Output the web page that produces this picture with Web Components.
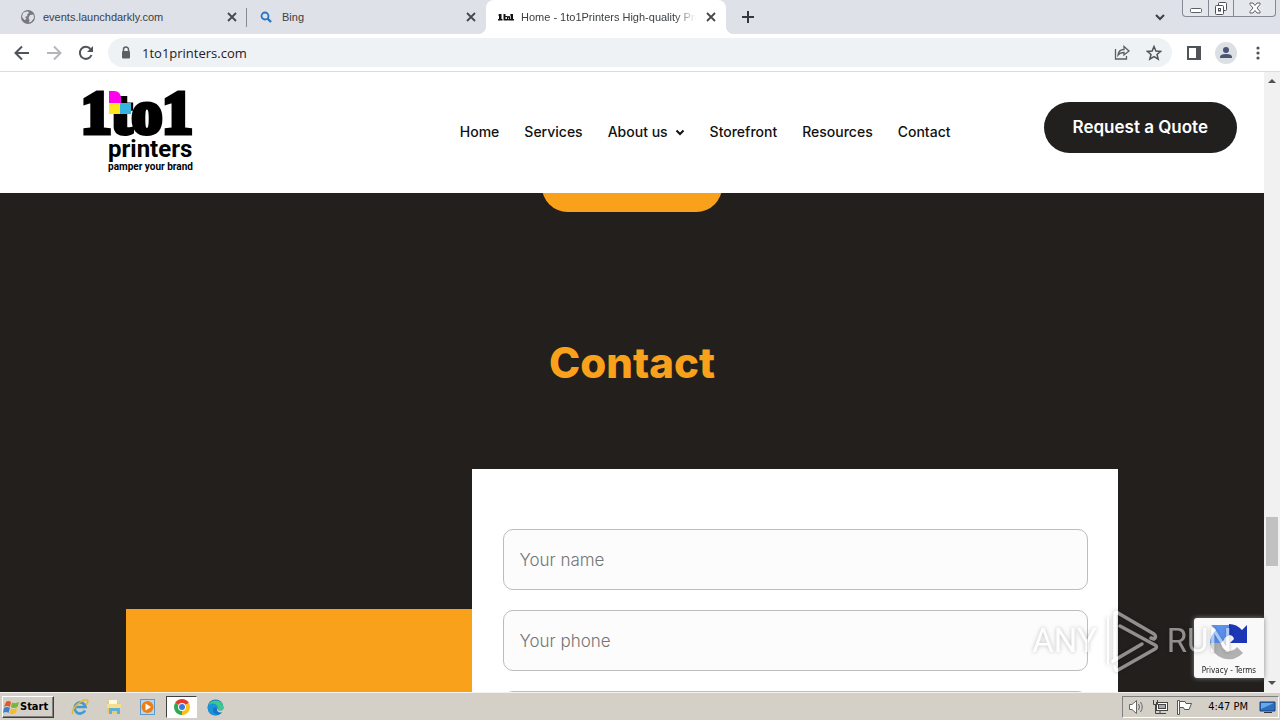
<!DOCTYPE html>
<html lang="en">
<head>
<meta charset="utf-8">
<title>Home - 1to1Printers High-quality Printing</title>
<style>
  body {
    margin: 0;
    height: 100vh;
    display: flex;
    flex-direction: column;
    overflow: hidden;
    font-family: Inter, "Liberation Sans", sans-serif;
    --ui-font: "DejaVu Sans Condensed", "DejaVu Sans", sans-serif;
    --orange: #f9a11b;
    --dark: #221f1d;
  }
  main {
    flex: 1;
    min-height: 0;
    display: flex;
  }
  site-page {
    flex: 1;
    min-width: 0;
  }
</style>
</head>
<body>
<tab-strip>
  <browser-tab label="events.launchdarkly.com">
    <svg slot="icon" width="16" height="16" viewBox="0 0 16 16"><circle cx="8" cy="8" r="7" fill="#77797c"/><path d="M3 4 Q5 2 8 2.500 L9 4 L7 5.500 L7.500 7 L5 8 L6.500 10 L4.500 11 L2 8Z M10 6 L13.500 5.500 L14 9 L11.500 12.500 L9 13.500 L9.500 11 L8.500 9Z" fill="#dee1e8"/></svg>
  </browser-tab>
  <browser-tab label="Bing">
    <svg slot="icon" width="16" height="16" viewBox="0 0 16 16" fill="none" stroke="#2b74c0"><circle cx="6" cy="7" r="3.500" stroke-width="1.800"/><path d="M8.500 9.500 L12 13" stroke-width="2.400"/></svg>
  </browser-tab>
  <browser-tab label="Home - 1to1Printers High-quality Prin" active>
    <svg slot="icon" width="16" height="16" viewBox="0 0 16 16" fill="#111"><path d="M1 5h2.500v5h1v1.500H0v-1.500h1V6.500H0zM5.500 5h2v2h1.500v1H7.500v2H9v1.500H5.500zM12.500 5H15v5h1v1.500h-4v-1.500h.8V6.500H12z"/><rect x="9.500" y="7.800" width="2" height="3" fill="none" stroke="#111" stroke-width="1.200"/></svg>
  </browser-tab>
</tab-strip>
<address-bar url="1to1printers.com"></address-bar>
<main>
  <site-page>
    <site-header slot="header">
      <brand-logo slot="logo"></brand-logo>
      <nav-link href="#home">Home</nav-link>
      <nav-link href="#services">Services</nav-link>
      <nav-link href="#about" dropdown>About us</nav-link>
      <nav-link href="#storefront">Storefront</nav-link>
      <nav-link href="#resources">Resources</nav-link>
      <nav-link href="#contact">Contact</nav-link>
    </site-header>
    <contact-section heading="Contact">
      <form-field label="Your name" name="name"></form-field>
      <form-field label="Your phone" name="phone" type="tel"></form-field>
      <form-field label="Your email" name="email" type="email"></form-field>
    </contact-section>
  </site-page>
  <scroll-bar></scroll-bar>
</main>
<task-bar time="4:47 PM"></task-bar>
<recaptcha-badge></recaptcha-badge>
<water-mark></water-mark>

<script>
class BaseElement extends HTMLElement {
  constructor() {
    super();
    this.attachShadow({ mode: "open" });
  }

  connectedCallback() {
    this.shadowRoot.innerHTML = `<style>* { box-sizing: border-box; } svg { display: block; flex: none; }</style>` + this.render();
  }
}

class TabStrip extends BaseElement {
  render() {
    return `
      <style>
        :host {
          display: flex;
          flex: none;
          height: 34px;
          padding-left: 8px;
          background: #dee1e8;
          color: #3c4043;
        }
        button {
          border: 0;
          padding: 0;
          background: none;
          color: inherit;
          display: flex;
          align-items: center;
          justify-content: center;
        }
        .new { width: 44px; }
        .search { width: 44px; margin-left: auto; }
        .controls {
          display: flex;
          height: 17px;
          margin: 0 4px 0 0;
          border: 1px solid #858993;
          border-top: 0;
          border-radius: 0 0 4px 4px;
          background: #e4e7ec;
        }
        .controls button { width: 25px; }
        .controls button + button { border-left: 1px solid #858993; }
        .controls button:last-child { width: 42px; }
      </style>
      <slot></slot>
      <button class="new" aria-label="New tab">
        <svg width="14" height="14" viewBox="0 0 14 14" stroke="#34373b" stroke-width="2"><path d="M7 1V13M1 7H13"/></svg>
      </button>
      <button class="search" aria-label="Search tabs">
        <svg width="12" height="12" viewBox="0 0 12 12" fill="none" stroke="#3c4043" stroke-width="2"><path d="M2 4L6 8L10 4"/></svg>
      </button>
      <div class="controls">
        <button aria-label="Minimize"><svg width="14" height="14" viewBox="0 0 14 14"><rect x="1.500" y="7.500" width="11" height="4" rx="1" fill="#fff" stroke="#5c6068"/></svg></button>
        <button aria-label="Restore"><svg width="14" height="14" viewBox="0 0 14 14" fill="#fff" stroke="#4c5058"><rect x="4.500" y="1.500" width="8" height="8" rx="1"/><rect x="1.500" y="4.500" width="8" height="9" rx="1"/><rect x="4.500" y="7.500" width="2" height="2.500"/></svg></button>
        <button aria-label="Close"><svg width="14" height="12" viewBox="0 0 14 12" fill="#fff" stroke="#5c6068"><path d="M2 1H5L7 3.500L9 1H12V2.500L9 6L12 9.500V11H9L7 8.500L5 11H2V9.500L5 6L2 2.500Z"/></svg></button>
      </div>
    `;
  }
}

class BrowserTab extends BaseElement {
  render() {
    return `
      <style>
        :host {
          position: relative;
          display: flex;
          align-items: center;
          gap: 7px;
          width: 239px;
          padding: 0 7px 0 12px;
          box-sizing: border-box;
          font: 11px/16px "Liberation Sans", sans-serif;
        }
        :host(:first-child)::after {
          content: "";
          position: absolute;
          right: 0;
          top: 8px;
          width: 1px;
          height: 19px;
          background: #868b94;
        }
        :host([active]) {
          width: 240px;
          background: #fff;
          border-radius: 8px 8px 0 0;
        }
        /* outward curves where the active tab meets the toolbar */
        :host([active])::before,
        :host([active])::after {
          content: "";
          position: absolute;
          bottom: 0;
          width: 8px;
          height: 8px;
        }
        :host([active])::before {
          left: -8px;
          background: radial-gradient(circle at 0 0, #dee1e8 8px, #fff 8px);
        }
        :host([active])::after {
          right: -8px;
          background: radial-gradient(circle at 100% 0, #dee1e8 8px, #fff 8px);
        }
        .label {
          flex: 1;
          min-width: 0;
          overflow: hidden;
          white-space: nowrap;
        }
        :host([active]) .label {
          -webkit-mask-image: linear-gradient(90deg, #000 88%, transparent);
          mask-image: linear-gradient(90deg, #000 88%, transparent);
        }
        button {
          width: 16px;
          height: 16px;
          padding: 3px;
          border: 0;
          background: none;
        }
      </style>
      <slot name="icon"></slot>
      <span class="label">${this.getAttribute("label")}</span>
      <button aria-label="Close tab">
        <svg width="10" height="10" viewBox="0 0 10 10" stroke="#45484d" stroke-width="1.800"><path d="M1 1L9 9M9 1L1 9"/></svg>
      </button>
    `;
  }
}

class AddressBar extends BaseElement {
  render() {
    return `
      <style>
        :host {
          display: flex;
          flex: none;
          align-items: center;
          height: 38px;
          box-sizing: border-box;
          padding: 0 6px;
          border-bottom: 1px solid #dadce0;
          background: #fff;
        }
        button {
          width: 32px;
          height: 32px;
          padding: 0;
          border: 0;
          background: none;
          display: flex;
          align-items: center;
          justify-content: center;
        }
        .box {
          flex: 1;
          display: flex;
          align-items: center;
          height: 29px;
          margin: 0 6px;
          padding: 0 2px 0 10px;
          border-radius: 15px;
          background: #eff2f5;
        }
        input {
          flex: 1;
          min-width: 0;
          margin-left: 8px;
          padding: 0;
          border: 0;
          outline: 0;
          background: none;
          color: #202124;
          font: 13px/20px "Open Sans", sans-serif;
        }
      </style>
      <button aria-label="Back"><svg width="16" height="16" viewBox="0 0 16 16" fill="none" stroke="#505357" stroke-width="2"><path d="M15 8H2M8 1.500L1.500 8L8 14.500"/></svg></button>
      <button aria-label="Forward"><svg width="16" height="16" viewBox="0 0 16 16" fill="none" stroke="#b4b6b9" stroke-width="2"><path d="M1 8H14M8 1.500L14.500 8L8 14.500"/></svg></button>
      <button aria-label="Reload"><svg width="16" height="16" viewBox="0 0 16 16"><path d="M13.500 10A6 6 0 1 1 12.500 4" fill="none" stroke="#505357" stroke-width="2"/><path d="M15 1V7H9Z" fill="#505357"/></svg></button>
      <div class="box">
        <svg width="16" height="16" viewBox="0 0 16 16"><path d="M5.500 6V4.500a2.500 2.500 0 0 1 5 0V6" fill="none" stroke="#5b5e62" stroke-width="1.500"/><rect x="4" y="6" width="8" height="7.500" rx="1" fill="#5b5e62"/></svg>
        <input type="text" aria-label="Address" value="${this.getAttribute("url")}">
        <button aria-label="Share"><svg width="16" height="16" viewBox="0 0 16 16" fill="none" stroke="#5b5e62" stroke-width="1.300"><path d="M1.500 4V14H12.500V11"/><path d="M4 10C4.500 6 7 4.500 10 4.500V1.500L15 6L10 10V7.500C7.500 7.500 5.500 8 4 10Z"/></svg></button>
        <button aria-label="Bookmark"><svg width="16" height="16" viewBox="0 0 16 16"><path d="M8 1.500L9.900 6L14.700 6.400L11 9.500L12.200 14.200L8 11.700L3.800 14.200L5 9.500L1.300 6.400L6.100 6Z" fill="none" stroke="#505357" stroke-width="1.500"/></svg></button>
      </div>
      <button aria-label="Side panel"><svg width="16" height="16" viewBox="0 0 16 16"><rect x="2" y="2" width="12" height="12" fill="none" stroke="#505357" stroke-width="2"/><path d="M10 2H15V14H10Z" fill="#505357"/></svg></button>
      <button aria-label="Profile"><svg width="22" height="22" viewBox="0 0 22 22"><circle cx="11" cy="11" r="11" fill="#dcdfe3"/><circle cx="11" cy="8" r="3" fill="#4a5673"/><path d="M5 16V15Q5 12 11 12T17 15V16Z" fill="#4a5673"/></svg></button>
      <button aria-label="Menu"><svg width="16" height="16" viewBox="0 0 16 16" fill="#505357"><circle cx="8" cy="3" r="1.600"/><circle cx="8" cy="8" r="1.600"/><circle cx="8" cy="13" r="1.600"/></svg></button>
    `;
  }
}

class SitePage extends BaseElement {
  render() {
    return `
      <style>
        :host {
          display: flex;
          flex-direction: column;
          overflow: hidden;
          background: var(--dark);
        }
      </style>
      <slot name="header"></slot>
      <slot></slot>
    `;
  }
}

class SiteHeader extends BaseElement {
  render() {
    return `
      <style>
        :host {
          display: grid;
          grid-template-columns: 30% auto 1fr;
          align-items: center;
          flex: none;
          height: 121px;
          box-sizing: border-box;
          padding: 0 27px 0 81px;
          background: #fff;
        }
        nav {
          display: flex;
          gap: 25px;
          margin: 0 0 2px 32px;
        }
        .quote {
          justify-self: end;
          margin-bottom: 10px;
          padding: 0 29px;
          border-radius: 26px;
          background: #221f1f;
          color: #fff;
          font-size: 17px;
          font-weight: 600;
          line-height: 51px;
          text-decoration: none;
          white-space: nowrap;
        }
      </style>
      <slot name="logo"></slot>
      <nav><slot></slot></nav>
      <a class="quote" href="#quote">Request a Quote</a>
    `;
  }
}

class BrandLogo extends BaseElement {
  render() {
    return `
      <style>
        :host { display: block; }
        svg { overflow: visible; }
      </style>
      <svg width="114" height="84" viewBox="0 0 114 84" role="img" aria-label="1to1 printers, pamper your brand">
        <text x="0" y="42" font-family="Liberation Serif" font-weight="700" font-size="61" stroke="#000" stroke-width="5">1to1</text>
        <path d="M28 0H33Q40 0 40 8V12H28Z" fill="#f0e"/>
        <rect x="28" y="12" width="11" height="11" fill="#ffe51f"/>
        <rect x="39" y="12" width="11" height="11" fill="#35b4dd"/>
        <text x="27" y="66" font-family="Roboto" font-weight="700" font-size="24">printers</text>
        <text x="27" y="79" font-family="Roboto" font-weight="700" font-size="10">pamper your brand</text>
      </svg>
    `;
  }
}

class NavLink extends BaseElement {
  render() {
    const arrow = this.hasAttribute("dropdown")
      ? `<svg width="10" height="10" viewBox="0 0 10 10" fill="none" stroke="#111" stroke-width="2"><path d="M1.500 3.500L5 7L8.500 3.500"/></svg>`
      : "";
    return `
      <style>
        :host { display: block; }
        a {
          display: flex;
          align-items: center;
          gap: 7px;
          color: #111;
          font-size: 14px;
          font-weight: 500;
          line-height: 20px;
          text-decoration: none;
          white-space: nowrap;
        }
      </style>
      <a href="${this.getAttribute("href")}"><slot></slot>${arrow}</a>
    `;
  }
}

class ContactSection extends BaseElement {
  render() {
    return `
      <style>
        :host {
          display: flex;
          flex-direction: column;
          flex: 1;
          min-height: 0;
          overflow: hidden;
        }
        /* end of the previous section, mostly scrolled under the header */
        .cta {
          flex: none;
          align-self: center;
          width: 180px;
          height: 51px;
          margin-top: -32px;
          border-radius: 26px;
          background: var(--orange);
        }
        h2 {
          flex: none;
          margin: 121px 0 76px;
          color: var(--orange);
          font-size: 42px;
          font-weight: 800;
          line-height: 60px;
          text-align: center;
        }
        .columns {
          flex: 1;
          display: grid;
          grid-template-columns: 346px 1fr;
          width: 80%;
          margin: 0 auto;
          box-sizing: border-box;
          padding-right: 20px;
        }
        .panel {
          margin-top: 140px;
          background: var(--orange);
        }
        form {
          display: flex;
          flex-direction: column;
          gap: 20px;
          padding: 60px 30px 0 31px;
          background: #fff;
        }
      </style>
      <a class="cta" href="#more" aria-label="More"></a>
      <h2>${this.getAttribute("heading")}</h2>
      <div class="columns">
        <div class="panel"></div>
        <form><slot></slot></form>
      </div>
    `;
  }
}

class FormField extends BaseElement {
  render() {
    const label = this.getAttribute("label");
    return `
      <style>
        :host { display: block; }
        input {
          display: block;
          width: 100%;
          height: 61px;
          padding: 0 15px;
          border: 1px solid #bdbdbd;
          border-radius: 10px;
          outline: 0;
          background: #fcfcfc;
          font: 300 17px/24px Inter, sans-serif;
        }
        input::placeholder { color: #757575; }
      </style>
      <input type="${this.getAttribute("type") || "text"}" name="${this.getAttribute("name")}" placeholder="${label}" aria-label="${label}">
    `;
  }
}

class ScrollBar extends BaseElement {
  render() {
    return `
      <style>
        :host {
          display: flex;
          flex-direction: column;
          align-items: center;
          width: 16px;
          background: #f1f1f1;
        }
        .space-top { flex: 428; }
        .thumb { flex: 49; width: 12px; background: #c1c1c1; }
        .space-bottom { flex: 109; }
      </style>
      <svg width="16" height="17" viewBox="0 0 16 17"><path d="M4 11L8 7L12 11Z" fill="#505050"/></svg>
      <div class="space-top"></div>
      <div class="thumb"></div>
      <div class="space-bottom"></div>
      <svg width="16" height="17" viewBox="0 0 16 17"><path d="M4 6L8 10L12 6Z" fill="#505050"/></svg>
    `;
  }
}

class TaskBar extends BaseElement {
  render() {
    return `
      <style>
        :host {
          display: flex;
          align-items: center;
          flex: none;
          height: 28px;
          box-sizing: border-box;
          padding: 1px 1px 0 2px;
          border-top: 1px solid #f4f2ee;
          background: #d4d0c8;
          color: #000;
          font: 11px/16px var(--ui-font);
        }
        button {
          display: flex;
          align-items: center;
          justify-content: center;
          padding: 0;
          border: 0;
          background: none;
          font: inherit;
        }
        .start {
          justify-content: flex-start;
          width: 52px;
          height: 22px;
          margin-right: 10px;
          border: 1px solid;
          border-color: #fff #404040 #404040 #fff;
          box-shadow: inset -1px -1px #808080;
          font-weight: 700;
        }
        .app { width: 31px; height: 22px; margin-right: 3px; }
        .pressed {
          border: 1px solid;
          border-color: #404040 #fff #fff #404040;
          background: #fff;
        }
        .tray {
          display: flex;
          align-items: center;
          gap: 7px;
          height: 22px;
          margin-left: auto;
          padding: 0 2px 0 5px;
          border: 1px solid;
          border-color: #808080 #fff #fff #808080;
        }
        .time { margin: 0 4px 0 8px; }
      </style>
      <button class="start">
        <svg width="17" height="17" viewBox="0 0 17 17"><path d="M3 3Q5 1 8 3L7 8Q4 6 1 8Z" fill="#e2582a"/><path d="M9 3.500Q12 5 16 3L14.500 8Q11 10 8 8Z" fill="#79b53a"/><path d="M1 9Q4 7 7 9L5.500 14Q3 12 0 14Z" fill="#3a80ca"/><path d="M8 9.500Q11 11 14 9L13 14Q9 16 6.500 14.500Z" fill="#f4bd27"/></svg>
        Start
      </button>
      <button class="app" aria-label="Internet Explorer"><svg width="18" height="18" viewBox="0 0 18 18" fill="none"><path d="M14 12.500A5.500 5.500 0 1 1 14.500 9H4" stroke="#3f9bd8" stroke-width="2.700"/><path d="M2 16C-1 12 10 1 16 2C18 3 16 6 15 7" stroke="#e5b83c" stroke-width="1.500"/></svg></button>
      <button class="app" aria-label="Explorer"><svg width="18" height="18" viewBox="0 0 18 18"><path d="M2 3H7L8 5H15V15H2Z" fill="#e9cb6b"/><path d="M4 2H12V6H4Z" fill="#fffbe0"/><path d="M2 6H16V10H2Z" fill="#f5df8f"/><path d="M4 16V10H15V16H12V13H7V16Z" fill="#62afd8"/></svg></button>
      <button class="app" aria-label="Media Player"><svg width="18" height="18" viewBox="0 0 18 18"><rect x="1.500" y="1.500" width="14" height="15" fill="#b7d6ed" stroke="#5b9bcb"/><circle cx="8.500" cy="9" r="6" fill="#f07c13"/><path d="M6.500 5.500L12 9L6.500 12.500Z" fill="#fff"/></svg></button>
      <button class="app pressed" aria-label="Chrome"><svg width="16" height="16" viewBox="0 0 16 16"><path d="M8 8L1.100 4A8 8 0 0 1 14.900 4Z" fill="#e33b2e"/><path d="M8 8L14.900 4A8 8 0 0 1 8 16Z" fill="#fbc116"/><path d="M8 8L8 16A8 8 0 0 1 1.100 4Z" fill="#2da94f"/><circle cx="8" cy="8" r="4" fill="#fff"/><circle cx="8" cy="8" r="3" fill="#3b78e7"/></svg></button>
      <button class="app" aria-label="Edge"><svg width="17" height="17" viewBox="0 0 17 17"><circle cx="8.500" cy="8.500" r="8" fill="#1673c5"/><path d="M1 7A8 8 0 0 1 16.500 8C16.500 11 12.500 12 10 11C12 8 9 5 6 5.500C3.500 5.500 2 6 1 7Z" fill="#3fc78d"/><path d="M1 7C4 3 10 4 10.500 8L10 10C9 8 6 8 6 11C6 14 9 16 12 15.500C6 18 0 14 1 7Z" fill="#1b93d8"/><path d="M10.500 8.500Q10 11 12 11.500Q15 12 16 10L17 13L13 13.500Q9 13 10.500 8.500Z" fill="#d4d0c8"/></svg></button>
      <div class="tray">
        <svg width="17" height="16" viewBox="0 0 17 16" fill="none" stroke="#666"><path d="M1.500 5.500H4L8.500 1.500V14.500L4 10.500H1.500Z" fill="#fff"/><path d="M10.500 5Q12.500 8 10.500 11M12.500 3Q16 8 12.500 13"/></svg>
        <svg width="17" height="16" viewBox="0 0 17 16" fill="#fff" stroke="#444"><rect x="4.500" y="3.500" width="11" height="8"/><rect x="6.500" y="5.500" width="7" height="4" fill="#aaa"/><path d="M8 12V14.500H14M1.500 1V5.500H5.500V1M3.500 6V14.500H8" fill="none"/></svg>
        <svg width="17" height="16" viewBox="0 0 17 16" fill="#fff" stroke="#555"><path d="M1.500 1.500H3.500V15.500H1.500Z"/><path d="M3.500 2.500H9L10 4.500H15.500L13 10.500H8.500L7.500 8.500H3.500Z"/></svg>
        <span class="time">${this.getAttribute("time")}</span>
        <svg width="17" height="16" viewBox="0 0 17 16"><path d="M1 3H16V12H1Z" fill="#2a6ec4" stroke="#1c3e78"/><path d="M2 4H15L2 10Z" fill="#65a9e6"/><path d="M5 13H13V14H5Z" fill="#333"/></svg>
      </div>
    `;
  }
}

class RecaptchaBadge extends BaseElement {
  render() {
    return `
      <style>
        :host {
          position: fixed;
          right: 16px;
          bottom: 42px;
          display: flex;
          flex-direction: column;
          align-items: center;
          gap: 2px;
          width: 70px;
          height: 60px;
          padding-top: 5px;
          box-sizing: border-box;
          border-radius: 3px 0 0 3px;
          background: #f9f9f9;
          box-shadow: 0 0 5px #888;
        }
        div {
          color: #222;
          font: 8px/12px "DejaVu Sans Condensed", sans-serif;
          white-space: nowrap;
        }
        a { color: inherit; text-decoration: none; }
      </style>
      <svg width="40" height="40" viewBox="0 0 40 40">
        <path d="M1 20A19 19 0 0 1 7 7L2 2H20V13Q16 13 15 17L12 20Z" fill="#5b93ee"/>
        <path d="M20 1A18 18 0 0 1 33 7L38 2V20H21L25 16Q24 12 20 12Z" fill="#1c36b5"/>
        <path d="M1 20H12Q13 28 20 28Q25 28 28 24L34 30A19 19 0 0 1 1 20Z" fill="#b1b1b1"/>
      </svg>
      <div><a href="#privacy">Privacy</a> - <a href="#terms">Terms</a></div>
    `;
  }
}

class WaterMark extends BaseElement {
  render() {
    return `
      <style>
        :host {
          position: fixed;
          right: 48px;
          bottom: 48px;
          display: flex;
          align-items: center;
          gap: 8px;
          color: #fff;
          opacity: 0.5;
          font: 33px/62px Roboto, sans-serif;
          text-shadow: 0 0 4px rgba(0, 0, 0, 0.5);
          pointer-events: none;
        }
        svg { filter: drop-shadow(0 0 2px rgba(0, 0, 0, 0.5)); }
      </style>
      <span>ANY</span>
      <svg width="54" height="62" viewBox="0 0 54 62" fill="none" stroke="#fff" stroke-width="3.500" stroke-linecap="round" stroke-linejoin="round">
        <path d="M10 48V5Q10 1 13 3L49 24Q52 27 49 29L46 28"/>
        <path d="M15 16L50 35Q53 37 50 39L13 60Q10 61 10 57"/>
        <path d="M37 34L8 51"/>
        <path d="M3 8V54" stroke-width="2"/>
      </svg>
      <span>RUN</span>
    `;
  }
}

customElements.define("tab-strip", TabStrip);
customElements.define("browser-tab", BrowserTab);
customElements.define("address-bar", AddressBar);
customElements.define("site-page", SitePage);
customElements.define("site-header", SiteHeader);
customElements.define("brand-logo", BrandLogo);
customElements.define("nav-link", NavLink);
customElements.define("contact-section", ContactSection);
customElements.define("form-field", FormField);
customElements.define("scroll-bar", ScrollBar);
customElements.define("task-bar", TaskBar);
customElements.define("recaptcha-badge", RecaptchaBadge);
customElements.define("water-mark", WaterMark);
</script>
</body>
</html>
